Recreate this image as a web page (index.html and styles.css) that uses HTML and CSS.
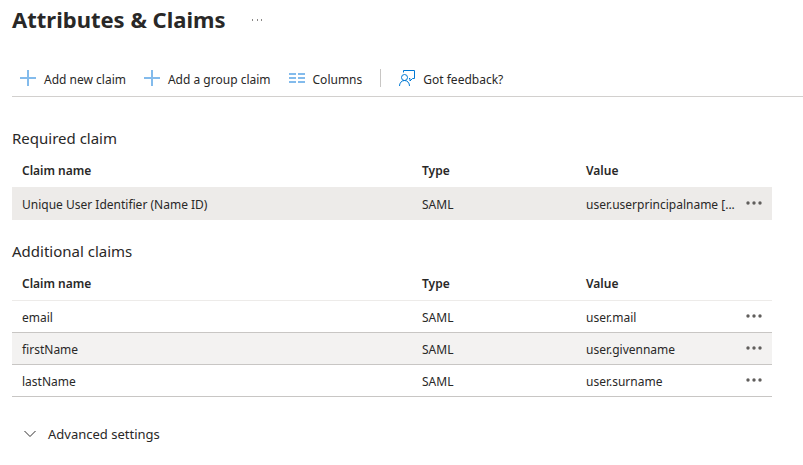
FILE: index.html
```html
<!DOCTYPE html>
<html lang="en">
<head>
<meta charset="utf-8">
<meta name="viewport" content="width=device-width, initial-scale=1">
<title>Attributes &amp; Claims</title>
<link rel="stylesheet" href="styles.css">
</head>
<body>
<svg class="sprite" aria-hidden="true">
  <symbol id="dots" viewBox="0 0 18 6"><circle cx="3" cy="3" r="1.700"/><circle cx="9" cy="3" r="1.700"/><circle cx="15" cy="3" r="1.700"/></symbol>
  <symbol id="plus" viewBox="0 0 16 16"><path d="M8 0v16M0 8h16"/></symbol>
</svg>
<header class="page-header">
  <h1>Attributes &amp; Claims</h1>
  <button class="more" type="button" aria-label="More options">
    <svg width="12" height="2" viewBox="0 0 12 2"><path d="M0 0h1v2h-1zM5 0h1v2h-1zM9 0h1v2h-1z"/></svg>
  </button>
</header>
<div class="toolbar" role="toolbar" aria-label="Claim commands">
  <button class="command" type="button"><svg class="plus" width="16" height="16"><use href="#plus"/></svg><span>Add new claim</span></button>
  <button class="command" type="button"><svg class="plus" width="16" height="16"><use href="#plus"/></svg><span>Add a group claim</span></button>
  <button class="command" type="button"><svg class="columns" width="16" height="16" viewBox="0 0 16 16"><path d="M0 4h7M9 4h7M0 8h7M9 8h7M0 12h7M9 12h7"/></svg><span>Columns</span></button>
  <span class="divider"></span>
  <button class="command" type="button"><svg class="feedback" width="16" height="16" viewBox="0 0 16 16"><path d="M4.500 2.500V.5h11v8h-2l-2.500 2.500V8.500H10"/><circle cx="5.500" cy="7.500" r="3"/><path d="M.5 16c0-3 2-5.500 5-5.500s5 2.500 5 5.500"/></svg><span>Got feedback?</span></button>
</div>
<main>
  <section>
    <h2 id="required">Required claim</h2>
    <table class="claims required" aria-labelledby="required">
      <colgroup><col><col class="col-type"><col class="col-value"><col class="col-menu"></colgroup>
      <thead><tr><th scope="col">Claim name</th><th scope="col">Type</th><th scope="col">Value</th><td></td></tr></thead>
      <tbody>
        <tr><td>Unique User Identifier (Name ID)</td><td>SAML</td><td>user.userprincipalname [...</td><td class="menu"><button type="button" aria-label="Claim options"><svg width="18" height="6"><use href="#dots"/></svg></button></td></tr>
      </tbody>
    </table>
  </section>
  <section>
    <h2 id="additional">Additional claims</h2>
    <table class="claims" aria-labelledby="additional">
      <colgroup><col><col class="col-type"><col class="col-value"><col class="col-menu"></colgroup>
      <thead><tr><th scope="col">Claim name</th><th scope="col">Type</th><th scope="col">Value</th><td></td></tr></thead>
      <tbody>
        <tr><td>email</td><td>SAML</td><td>user.mail</td><td class="menu"><button type="button" aria-label="Claim options"><svg width="18" height="6"><use href="#dots"/></svg></button></td></tr>
        <tr class="hovered"><td>firstName</td><td>SAML</td><td>user.givenname</td><td class="menu"><button type="button" aria-label="Claim options"><svg width="18" height="6"><use href="#dots"/></svg></button></td></tr>
        <tr><td>lastName</td><td>SAML</td><td>user.surname</td><td class="menu"><button type="button" aria-label="Claim options"><svg width="18" height="6"><use href="#dots"/></svg></button></td></tr>
      </tbody>
    </table>
  </section>
  <button class="advanced" type="button" aria-expanded="false">
    <svg width="12" height="8" viewBox="0 0 12 8"><path d="M.5 1 6 6.500 11.500 1"/></svg><span>Advanced settings</span>
  </button>
</main>
</body>
</html>
```
FILE: styles.css
```css
* {
  box-sizing: border-box;
}

body {
  margin: 0;
  padding-left: 12px;
  background: #fff;
  color: #292827;
  font-family: "Segoe UI", "Noto Sans", "Open Sans", sans-serif;
  font-size: 12px;
  line-height: 16px;
}

.sprite {
  position: absolute;
  width: 0;
  height: 0;
}

button {
  margin: 0;
  padding: 0;
  border: 0;
  background: none;
  color: inherit;
  font: inherit;
  cursor: pointer;
}

svg {
  display: block;
  flex: none;
}

.page-header {
  display: flex;
  align-items: center;
  gap: 26px;
  height: 40px;
}

h1 {
  margin: 0;
  padding-bottom: 2px;
  font-size: 22px;
  font-weight: 700;
  line-height: 32px;
}

.more {
  fill: #8a8886;
}

.toolbar {
  display: flex;
  align-items: center;
  gap: 18px;
  margin-top: 20px;
  height: 37px;
  padding-left: 8px;
  border-bottom: 1px solid #d2d0ce;
}

.command {
  display: flex;
  align-items: center;
  gap: 8px;
  white-space: nowrap;
}

.command span {
  padding-top: 3px;
}

.command svg {
  fill: none;
  stroke: #0078d4;
}

.command .plus,
.command .columns {
  stroke: #83bbec;
  stroke-width: 2px;
}

.divider {
  width: 1px;
  height: 18px;
  background: #c8c6c4;
}

main {
  padding: 29px 31px 0 0;
}

section {
  margin-bottom: 19px;
}

h2 {
  margin: 0;
  padding-bottom: 5px;
  font-size: 15px;
  font-weight: 400;
  line-height: 24px;
}

.claims {
  width: 100%;
  table-layout: fixed;
  border-collapse: separate;
  border-spacing: 0;
}

.col-type {
  width: 164px;
}

.col-value {
  width: 162px;
}

.col-menu {
  width: 34px;
}

.claims th,
.claims td {
  height: 32px;
  padding: 2px 0 0 10px;
  border-bottom: 1px solid #c8c6c4;
  overflow: hidden;
  text-align: left;
  text-overflow: ellipsis;
  white-space: nowrap;
}

.claims th {
  font-weight: 600;
}

.claims thead th,
.claims thead td {
  height: 33px;
  padding-top: 0;
  border-color: #edebe9;
}

.claims .menu {
  padding: 0 0 0 7px;
}

.menu button {
  display: block;
  padding-bottom: 2px;
}

.menu svg {
  fill: #605e5c;
}

.required tbody td {
  border-color: #edebe9;
  background: #edebe9;
}

.hovered td {
  background: #f3f2f1;
}

.advanced {
  display: flex;
  align-items: center;
  gap: 12px;
  margin: 27px 0 0 12px;
  font-size: 13px;
  line-height: 20px;
}

.advanced svg {
  fill: none;
  stroke: #323130;
}
```
